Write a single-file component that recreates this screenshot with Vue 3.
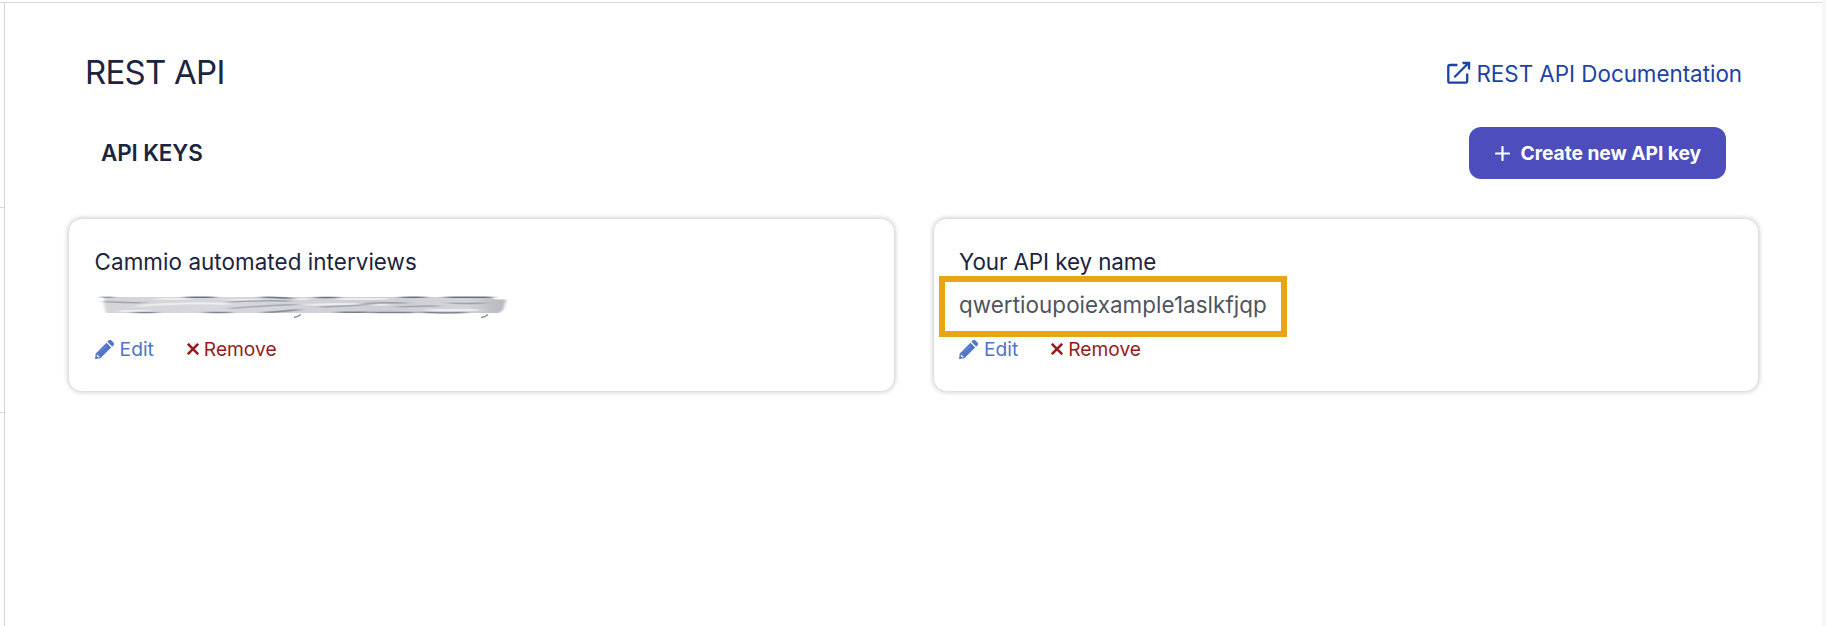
<script setup>
const keys = [
  { name: 'Cammio automated interviews', value: null },
  { name: 'Your API key name', value: 'qwertioupoiexample1aslkfjqp' },
]
</script>

<template>
  <div class="shell">
    <aside class="rail"><i></i><i></i><i></i></aside>
    <main class="page">
      <header class="top">
        <h1>REST API</h1>
        <a class="docs">
          <svg width="24" height="24" viewBox="0 0 24 24" fill="none" stroke="currentColor" stroke-width="2.300">
            <path d="M10.500 4H3a1.700 1.700 0 0 0-1.700 1.700V20A1.700 1.700 0 0 0 3 21.700h15.500A1.700 1.700 0 0 0 20.200 20v-7.500" />
            <path d="M7.300 16.300 21 2.500" />
            <path d="M15 0.800h8.200V9l-2.400-1V4.200l-1-1H16z" fill="currentColor" stroke="none" />
          </svg>
          <span>REST API Documentation</span>
        </a>
      </header>
      <section class="bar">
        <h2>API KEYS</h2>
        <button>
          <svg width="15" height="15" viewBox="0 0 15 15" fill="none" stroke="#fff" stroke-width="2.200" stroke-linecap="round">
            <path d="M7.500 1v13M1 7.500h13" />
          </svg>
          <span>Create new API key</span>
        </button>
      </section>
      <section class="cards">
        <article v-for="k in keys" :key="k.name" class="card" :class="{ named: k.value }">
          <h3>{{ k.name }}</h3>
          <div class="value">
            <span v-if="k.value" class="mark">{{ k.value }}</span>
            <svg v-else class="smudge" width="418" height="26" viewBox="0 0 418 26">
              <defs>
                <linearGradient id="ink" x1="0" x2="1" y1="0" y2="0">
                  <stop offset="0" stop-color="#d3d5d9" /><stop offset=".12" stop-color="#d4d6d9" />
                  <stop offset=".3" stop-color="#d6d8dc" /><stop offset=".45" stop-color="#d2d4d9" />
                  <stop offset=".7" stop-color="#ccced3" /><stop offset=".9" stop-color="#d3d5d8" />
                  <stop offset="1" stop-color="#b4b7bd" />
                </linearGradient>
                <filter id="soft" filterUnits="userSpaceOnUse" x="-5" y="-5" width="430" height="36"><feGaussianBlur stdDeviation="1.800 0.500" /></filter>
                <filter id="streak" filterUnits="userSpaceOnUse" x="-5" y="-5" width="430" height="36"><feGaussianBlur stdDeviation="5 0.700" /></filter>
              </defs>
              <path d="M6 2H392L398 4.500H408L405 15 401 18H8L6 10z" fill="url(#ink)" filter="url(#soft)" />
              <g filter="url(#streak)" fill="none">
                <path d="M60 4h30M132 5h30M190 4h20M240 4h50M40 11q50-4 90-2M210 10q42-2 80 0M330 15h50M22 16h30" stroke="#eceef0" stroke-width="2" />
                <g stroke="#5d6475" stroke-width="1.500">
                  <path d="M5 2.300h8M88 2.300h28M164 2.300q16-.5 32 1.500M218 2.600h22M303 2.300h24M348 2.300h46" opacity=".9" />
                  <path d="M6 6.500q20 1.500 40 1M130 7q30-2 62-1M262 9q20-2 46-1M352 8q20 1 34 0" opacity=".45" />
                  <path d="M132 13.500q35-3 66-4M222 12q30-1 54-3M300 12q22-1 40-1" opacity=".4" />
                  <path d="M36 17.500h22M108 17.500h24M166 17.500q20-1 34-3M240 17.300h30M274 17.500h42M324 17.300q20 1 44 .3" opacity=".75" />
                </g>
              </g>
              <path d="M196 22.500q3-.2 7-3M383 22.500q3 .3 7-3" stroke="#858993" stroke-width="1.500" fill="none" />
            </svg>
          </div>
          <div class="actions">
            <a class="edit">
              <svg width="19" height="19" viewBox="0 0 19 19" fill="currentColor">
                <path d="M11.500 2.700 16.200 7.400 5.300 18.200 0 19 .800 13.500z" />
                <path d="M12.400 1.800 13.600.600a2 2 0 0 1 2.800 0L18.400 2.600a2 2 0 0 1 0 2.800L17.100 6.600z" />
                <path d="M2 14.200 4.800 17 3.200 17.400 1.700 15.900z" fill="#fff" />
                <path d="M4.600 12.200 11.500 5.300" stroke="#7c94d6" stroke-width=".8" />
              </svg>
              <span>Edit</span>
            </a>
            <a class="remove">
              <svg width="12" height="12" viewBox="0 0 12 12" fill="none" stroke="currentColor" stroke-width="2.600">
                <path d="M.8.800l10.400 10.400M11.200.800.800 11.200" />
              </svg>
              <span>Remove</span>
            </a>
          </div>
        </article>
      </section>
    </main>
    <div class="edge"></div>
  </div>
</template>

<style>
body { margin: 0; background: #fff; }
</style>

<style scoped>
.shell { display: flex; width: 1826px; height: 626px; box-sizing: border-box; overflow: hidden; font-family: Inter, sans-serif; color: #1b2440; background: #fff; }
.rail { width: 4px; padding-top: 2px; display: flex; flex-direction: column; }
.rail i { height: 204px; border-top: 1px solid #d7d8df; }
.page { flex: 1; margin-top: 2px; border-top: 1px solid #d9dade; border-left: 1px solid #d5d6dd; }
.edge { width: 4px; background: #f5f8f9; }
h1, h2, h3 { margin: 0; font-weight: 400; white-space: nowrap; }
span { white-space: nowrap; }
.top { display: flex; justify-content: space-between; align-items: center; height: 62px; padding: 39px 80px 0 80px; }
h1 { font-size: 33px; line-height: 40px; letter-spacing: -.75px; padding-bottom: 2px; }
.docs { display: flex; align-items: center; gap: 5px; color: #1b43a5; font-size: 22.400px; letter-spacing: -.02px; }
.bar { display: flex; justify-content: space-between; align-items: center; height: 52px; padding: 23px 96px 0 96px; }
h2 { font-size: 22.400px; font-weight: 600; letter-spacing: -.1px; padding-bottom: 2px; }
button { display: flex; align-items: center; gap: 10.500px; box-sizing: border-box; width: 257px; height: 52px; padding: 0 0 0 26px; border: 0; border-radius: 12px; background: #4d4dbd; color: #fff; font: 700 19.200px Inter, sans-serif; letter-spacing: -.03px; }
.cards { display: grid; grid-template-columns: 825px 824px; gap: 40px; padding: 40px 0 0 64px; }
.card { height: 172px; box-sizing: border-box; padding: 28px 25.600px 0; border-radius: 13px; background: #fff; box-shadow: 0 0 5px 1px rgba(0, 0, 0, .22); }
.card.named { padding: 28px 25px 0; }
h3 { font-size: 22.400px; line-height: 30px; letter-spacing: .07px; }
.named h3 { letter-spacing: -.08px; }
.value { position: relative; height: 57px; font-size: 22.400px; color: #50545f; }
.smudge { display: block; padding: 18px 0 0 3px; }
.mark { position: absolute; left: -20px; top: -1px; box-sizing: border-box; width: 348px; height: 61px; border: 6px solid #e8a617; padding-left: 14px; line-height: 46px; letter-spacing: .06px; }
.actions { display: flex; align-items: center; gap: 33px; height: 30px; font-size: 19.200px; }
.actions a { display: flex; align-items: center; gap: 6px; }
.edit { color: #5273c8; }
.actions .remove { color: #971b1e; gap: 5px; }
</style>
